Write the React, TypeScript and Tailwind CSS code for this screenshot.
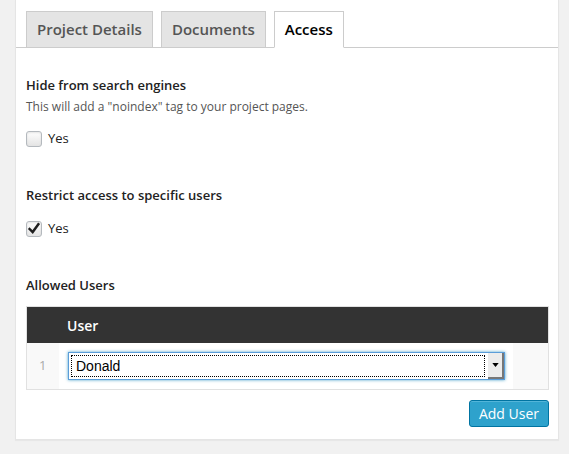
import * as React from 'react';

const font = { fontFamily: '"Open Sans", "Liberation Sans", sans-serif' };

function Tab({ label, active }: { label: string; active?: boolean }) {
	return (
		<div
			className={
				active
					? 'h-[37px] -mb-px flex items-center px-[10px] border border-[#ccc] border-b-white bg-white text-[15px] font-semibold text-black'
					: 'h-[37px] -mb-px flex items-center px-[10px] border border-[#ccc] bg-[#e4e4e4] text-[15px] font-semibold text-[#555]'
			}
		>
			{label}
		</div>
	);
}

function Checkbox({ checked }: { checked?: boolean }) {
	return (
		<span className="relative inline-block w-[16px] h-[16px] rounded-[3px] border border-[#b4b9be] bg-gradient-to-b from-[#fefefe] to-[#e4e4e4] shadow-[inset_0_1px_2px_rgba(0,0,0,0.1)]">
			{checked && (
				<svg viewBox="0 0 16 16" className="absolute top-[0px] left-[0px] w-[14px] h-[14px]">
					<path d="M3 8 L6.5 11.5 L13 2.5" fill="none" stroke="#1e1e1e" strokeWidth="2.8" strokeLinecap="square" />
				</svg>
			)}
		</span>
	);
}

export default function App() {
	return (
		<div className="w-[569px] h-[454px] bg-[#f1f1f1] overflow-hidden" style={font}>
			<div className="ml-[15px] w-[544px] h-[440px] bg-white border-x border-b border-[#e5e5e5] shadow-[0_1px_1px_rgba(0,0,0,0.04)]">
				{/* tabs */}
				<div className="flex gap-[8px] pl-[10px] pt-[11px] border-b border-[#ccc]">
					<Tab label="Project Details" />
					<Tab label="Documents" />
					<Tab label="Access" active />
				</div>

				<div className="pl-[10px] pr-[9px] pt-[27px] text-[#333]">
					<div className="text-[13px] font-semibold leading-[20px] text-[#222]">Hide from search engines</div>
					<div className="mt-[2px] text-[12px] leading-[20px] text-[#555]">This will add a "noindex" tag to your project pages.</div>
					<label className="mt-[14px] flex items-center gap-[6px] h-[16px]">
						<Checkbox />
						<span className="text-[13px] text-[#222]">Yes</span>
					</label>

					<div className="mt-[38px] text-[13px] font-semibold leading-[20px] text-[#222]">Restrict access to specific users</div>
					<label className="mt-[16px] flex items-center gap-[6px] h-[16px]">
						<Checkbox checked />
						<span className="text-[13px] text-[#222]">Yes</span>
					</label>

					<div className="mt-[38px] text-[13px] font-semibold leading-[20px] text-[#222]">Allowed Users</div>

					{/* table */}
					<div className="mt-[11px] border border-[#e1e1e1]">
						<div className="flex h-[36px] bg-[#333] text-white">
							<div className="w-[32px]" />
							<div className="flex items-center pl-[8px] text-[14px] font-semibold">User</div>
						</div>
						<div className="flex h-[46px] bg-[#f9f9f9]">
							<div className="w-[32px] flex items-center pl-[12px] text-[13px] text-[#aaa]">1</div>
							<div className="w-[454px] bg-white flex items-center pl-[9px]">
								<div className="relative w-[437px] h-[28px] border border-[#5b9dd9] shadow-[0_0_3px_rgba(30,140,190,0.8)] bg-white flex items-center">
									<div className="ml-[2px] w-[414px] h-[22px] border border-dotted border-black flex items-center pl-[4px] text-[14px] text-black" style={{ fontFamily: '"Liberation Sans", Arial, sans-serif' }}>
										Donald
									</div>
									<div className="absolute right-0 top-0 w-[16px] h-[26px] bg-[#ececec] border-r-2 border-b-2 border-[#777] flex items-center justify-center">
										<svg viewBox="0 0 8 5" className="w-[7px] h-[4px]">
											<path d="M0 0 L8 0 L4 5 Z" fill="#000" />
										</svg>
									</div>
								</div>
							</div>
						</div>
					</div>

					<div className="flex justify-end mt-[10px]">
						<button className="h-[27px] px-[9px] rounded-[3px] bg-[#2ea2cc] border border-[#0074a2] text-white text-[14px] shadow-[inset_0_1px_0_rgba(120,200,230,0.5)]">
							Add User
						</button>
					</div>
				</div>
			</div>
		</div>
	);
}
